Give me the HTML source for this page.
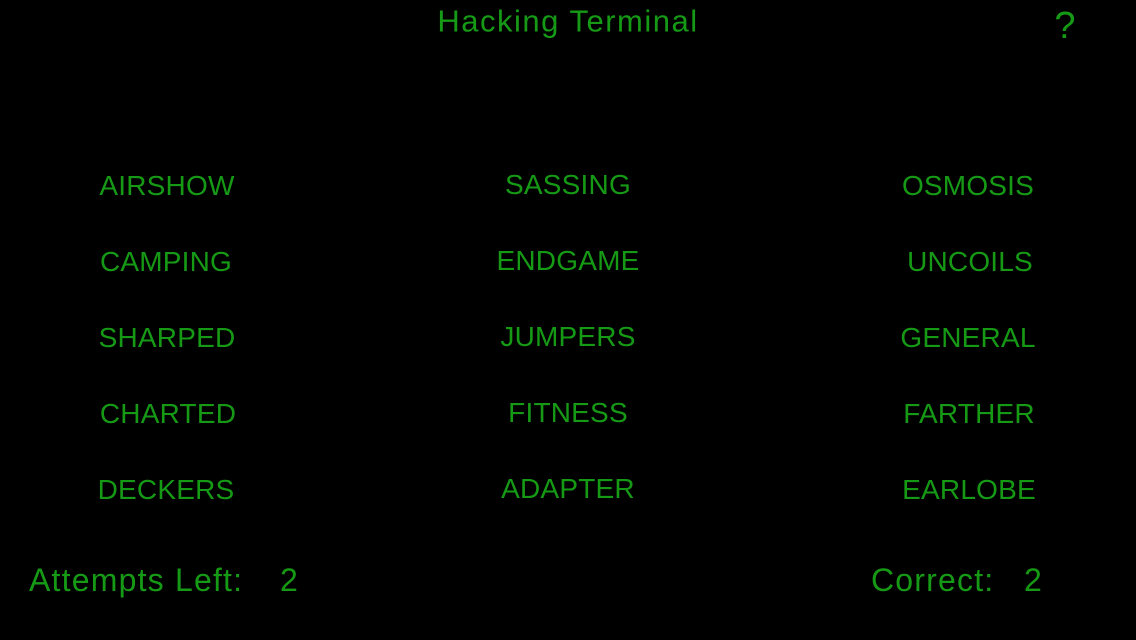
<!DOCTYPE html>
<html><head><style>
html,body{margin:0;padding:0;background:#000;width:1136px;height:640px;overflow:hidden}
body{position:relative;font-family:"Liberation Sans",sans-serif;color:#169a16}
.t{position:absolute;white-space:nowrap;line-height:1;transform:translate(-50%,-50%)}
.w{font-size:28px;letter-spacing:0.2px}
.b{position:absolute;font-size:32px;line-height:1;white-space:nowrap;letter-spacing:1.2px;top:564px}
</style></head><body>
<div class="t" style="left:568px;top:21px;font-size:31px;letter-spacing:1.5px">Hacking Terminal</div>
<div class="t" style="left:1065px;top:26px;font-size:38px">?</div>

<div class="t w" style="left:167px;top:186px">AIRSHOW</div>
<div class="t w" style="left:166px;top:262px">CAMPING</div>
<div class="t w" style="left:167px;top:338px">SHARPED</div>
<div class="t w" style="left:168px;top:414px">CHARTED</div>
<div class="t w" style="left:166px;top:490px">DECKERS</div>

<div class="t w" style="left:568px;top:185px">SASSING</div>
<div class="t w" style="left:568px;top:261px">ENDGAME</div>
<div class="t w" style="left:568px;top:337px">JUMPERS</div>
<div class="t w" style="left:568px;top:413px">FITNESS</div>
<div class="t w" style="left:568px;top:489px">ADAPTER</div>

<div class="t w" style="left:968px;top:186px">OSMOSIS</div>
<div class="t w" style="left:970px;top:262px">UNCOILS</div>
<div class="t w" style="left:968px;top:338px">GENERAL</div>
<div class="t w" style="left:969px;top:414px">FARTHER</div>
<div class="t w" style="left:969px;top:490px">EARLOBE</div>

<div class="b" style="left:29px">Attempts Left:</div>
<div class="b" style="left:280px">2</div>
<div class="b" style="left:871px">Correct:</div>
<div class="b" style="left:1024px">2</div>
</body></html>
